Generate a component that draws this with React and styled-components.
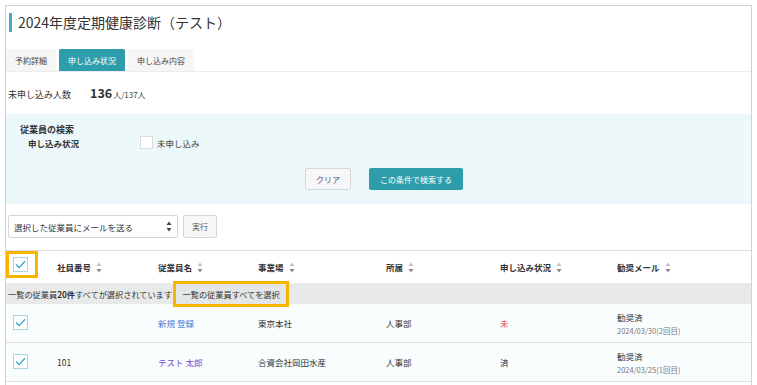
import React from 'react'
import styled, { createGlobalStyle } from 'styled-components'

const GlobalStyle = createGlobalStyle`
    body {
        margin: 0;
        background: #fff;
        font-family: "Noto Sans CJK JP", "Noto Sans", sans-serif;
        color: #333;
        overflow: hidden;
    }
`

const TEAL = '#2d9dab'
const ORANGE = '#f7b500'

const Page = styled.div`
    margin: 5px 5px 0 5px;
    border: 1px solid #d2d2d2;
    border-bottom: none;
    height: 400px;
`

const Title = styled.h1`
    margin: 7px 0 0 3px;
    padding-left: 6px;
    border-left: 3px solid #47a9bd;
    font-size: 14px;
    font-weight: 400;
    line-height: 19px;
    color: #333;
`

const Tabs = styled.div`
    display: flex;
    gap: 3px;
    margin-top: 17px;
    border-bottom: 1px solid #ececec;
`

const Tab = styled.div`
    height: 22px;
    padding: 0 9px;
    display: flex;
    align-items: center;
    font-size: 8px;
    background: ${p => (p.$active ? TEAL : '#f6f6f6')};
    color: ${p => (p.$active ? '#fff' : '#444')};
    border-radius: 2px 2px 0 0;
`

const CountRow = styled.div`
    display: flex;
    align-items: baseline;
    padding: 11px 0 0 2px;
    height: 32px;
    box-sizing: border-box;
    font-size: 9px;
    .label {
        width: 82px;
    }
    strong {
        font-size: 12.5px;
        margin-right: 1px;
    }
    small {
        font-size: 8px;
        color: #444;
    }
`

const SearchPanel = styled.div`
    margin-top: 10px;
    background: #edf8fa;
    height: 90px;
    padding: 9px 0 0 14px;
    box-sizing: border-box;
    h3 {
        margin: 0;
        font-size: 9px;
        font-weight: 700;
        line-height: 13px;
    }
`

const Field = styled.div`
    display: grid;
    grid-template-columns: 112px 1fr;
    align-items: center;
    padding-left: 8px;
    font-size: 8.5px;
    .name {
        font-weight: 700;
    }
    label {
        display: flex;
        align-items: center;
        gap: 4px;
        color: #444;
    }
`

const EmptyBox = styled.span`
    width: 11px;
    height: 11px;
    background: #fff;
    border: 1px solid #ddd;
    display: inline-block;
`

const ButtonRow = styled.div`
    display: flex;
    gap: 18px;
    padding-left: 285px;
    margin-top: 19px;
`

const Button = styled.button`
    height: 22px;
    padding: 0 ${p => (p.$primary ? '10px' : '10px')};
    font-family: inherit;
    font-size: 8px;
    border-radius: 2px;
    border: 1px solid ${p => (p.$primary ? TEAL : '#d8d8d8')};
    background: ${p => (p.$primary ? TEAL : '#f7f7f9')};
    color: ${p => (p.$primary ? '#fff' : '#555')};
`

const ActionRow = styled.div`
    display: flex;
    gap: 5px;
    padding: 11px 0 0 2px;
    height: 46px;
    box-sizing: border-box;
`

const Select = styled.div`
    width: 170px;
    height: 23px;
    box-sizing: border-box;
    border: 1px solid #d6d6d6;
    border-radius: 2px;
    display: flex;
    align-items: center;
    justify-content: space-between;
    padding: 0 5px;
    font-size: 8.5px;
    color: #333;
`

const SmallButton = styled.div`
    width: 34px;
    height: 23px;
    box-sizing: border-box;
    border: 1px solid #d6d6d6;
    border-radius: 2px;
    background: #f7f7f7;
    display: flex;
    align-items: center;
    justify-content: center;
    font-size: 8px;
    color: #555;
`

const Table = styled.div`
    border-top: 1px solid #dcdcdc;
`

const COLS = '43px 101px 100px 128px 114px 117px 1fr'

const HeadRow = styled.div`
    display: grid;
    grid-template-columns: ${COLS};
    align-items: center;
    height: 32px;
    font-size: 8.5px;
    font-weight: 700;
    color: #333;
`

const HeadCell = styled.div`
    display: flex;
    align-items: center;
    gap: 5px;
    padding-left: ${p => p.$pad ?? 8}px;
`

const Highlight = styled.div`
    border: 3px solid ${ORANGE};
    box-sizing: border-box;
    background: ${p => p.$bg || '#fff'};
`

const CheckCell = styled(HeadCell)`
    align-self: start;
`

const CheckHighlight = styled(Highlight)`
    width: 32px;
    height: 27px;
    display: flex;
    align-items: center;
    padding-left: 4px;
`

const SelectAllRow = styled.div`
    display: flex;
    align-items: center;
    height: 21px;
    background: #e8eaea;
    padding-left: 2px;
    font-size: 8.2px;
    color: #333;
    white-space: nowrap;
    b {
        font-weight: 700;
    }
`

const SelectAllButton = styled(Highlight)`
    margin-left: 1px;
    height: 26px;
    width: 116px;
    display: flex;
    align-items: center;
    justify-content: center;
    font-size: 8.2px;
    position: relative;
    z-index: 1;
`

const Row = styled.div`
    display: grid;
    grid-template-columns: ${COLS};
    align-items: center;
    height: 38px;
    border-bottom: 1px solid #dedede;
    background: #fafdfe;
    font-size: 8.5px;
    color: #333;
`

const Cell = styled.div`
    padding-left: ${p => p.$pad ?? 8}px;
    color: ${p => p.$color || 'inherit'};
    small {
        display: block;
        font-size: 7.5px;
        color: #777;
        margin-top: 2px;
    }
`

const Check = () => (
    <svg width="15" height="15" viewBox="0 0 15 15">
        <rect x="0.5" y="0.5" width="14" height="14" fill="#fff" stroke="#a6d6e2" />
        <path d="M3 7.5 L6.2 10.6 L12 4.2" fill="none" stroke="#35a8c8" strokeWidth="1.4" />
    </svg>
)

const Sort = () => (
    <svg width="6" height="11" viewBox="0 0 6 11">
        <path d="M3 0.5 L5.5 4 L0.5 4 Z" fill="#c0c0c0" />
        <path d="M3 10.5 L5.5 7 L0.5 7 Z" fill="#8a8a8a" />
    </svg>
)

const SelectArrows = () => (
    <svg width="6" height="11" viewBox="0 0 6 11">
        <path d="M3 0.5 L5.5 4 L0.5 4 Z" fill="#444" />
        <path d="M3 10.5 L5.5 7 L0.5 7 Z" fill="#444" />
    </svg>
)

const headers = ['社員番号', '従業員名', '事業場', '所属', '申し込み状況', '勧奨メール']

const rows = [
    { no: '', name: '新規 登録', nameColor: '#3b78d8', site: '東京本社', dept: '人事部', status: '未', statusColor: '#e0473a', date: '2024/03/30(2回目)' },
    { no: '101', name: 'テスト 太郎', nameColor: '#6c4ccf', site: '合資会社岡田水産', dept: '人事部', status: '済', date: '2024/03/25(1回目)' },
]

const App = () => {
    return (
        <>
            <GlobalStyle />
            <Page>
                <Title>2024年度定期健康診断（テスト）</Title>
                <Tabs>
                    <Tab>予約詳細</Tab>
                    <Tab $active>申し込み状況</Tab>
                    <Tab>申し込み内容</Tab>
                </Tabs>
                <CountRow>
                    <span className="label">未申し込み人数</span>
                    <strong>136</strong>
                    <small>人/137人</small>
                </CountRow>
                <SearchPanel>
                    <h3>従業員の検索</h3>
                    <Field>
                        <span className="name">申し込み状況</span>
                        <label><EmptyBox />未申し込み</label>
                    </Field>
                    <ButtonRow>
                        <Button>クリア</Button>
                        <Button $primary>この条件で検索する</Button>
                    </ButtonRow>
                </SearchPanel>
                <ActionRow>
                    <Select>
                        <span>選択した従業員にメールを送る</span>
                        <SelectArrows />
                    </Select>
                    <SmallButton>実行</SmallButton>
                </ActionRow>
                <Table>
                    <HeadRow>
                        <CheckCell $pad={0}>
                            <CheckHighlight><Check /></CheckHighlight>
                        </CheckCell>
                        {headers.map(h => (
                            <HeadCell key={h}>{h}<Sort /></HeadCell>
                        ))}
                    </HeadRow>
                    <SelectAllRow>
                        <span>一覧の従業員<b>20件</b>すべてが選択されています</span>
                        <SelectAllButton $bg="#e3e6e6">一覧の従業員すべてを選択</SelectAllButton>
                    </SelectAllRow>
                    {rows.map(r => (
                        <Row key={r.name}>
                            <Cell $pad={7}><Check /></Cell>
                            <Cell>{r.no}</Cell>
                            <Cell $color={r.nameColor}>{r.name}</Cell>
                            <Cell>{r.site}</Cell>
                            <Cell>{r.dept}</Cell>
                            <Cell $color={r.statusColor}>{r.status}</Cell>
                            <Cell>勧奨済<small>{r.date}</small></Cell>
                        </Row>
                    ))}
                </Table>
            </Page>
        </>
    )
}

export default App
